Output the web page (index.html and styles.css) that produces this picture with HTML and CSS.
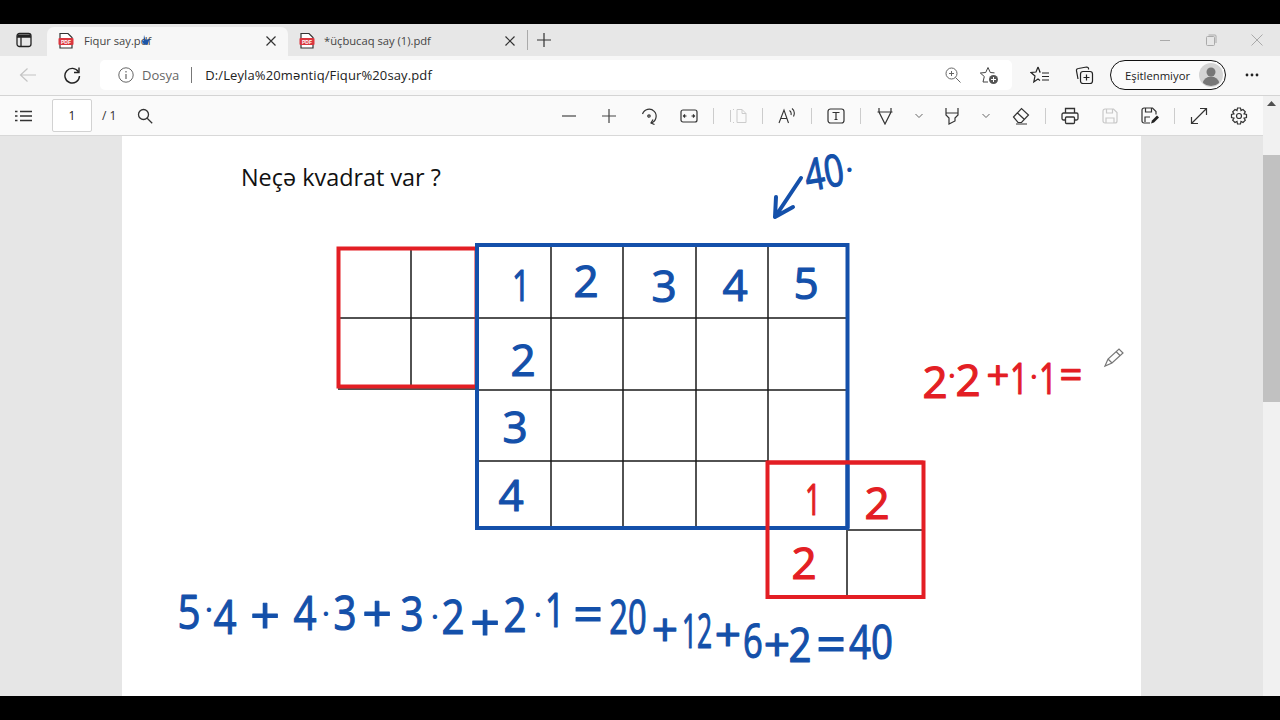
FILE: index.html
```html
<!DOCTYPE html>
<html lang="az">
<head>
  <meta charset="UTF-8">
  <title>Fiqur say.pdf</title>
  <link rel="stylesheet" href="styles.css">
</head>
<body>

<div class="video-bar"></div>

<div class="tab-strip">
  <button class="tab-actions">
    <svg width="16" height="16" viewBox="0 0 16 16" fill="none" stroke="#222" stroke-width="1.3"><rect x="1" y="1.500" width="14" height="13" rx="2.500"/><path d="M1 5h14M5 5v9.500"/><path d="M1.500 2.500h13v2.500h-13z" fill="#222" stroke="none"/></svg>
  </button>
  <div class="tab tab-active">
    <svg class="pdf-icon" width="16" height="17" viewBox="0 0 16 17"><path d="M2 1.500h8l4 4v10.500h-12z" fill="#fff" stroke="#333" stroke-width="1.200"/><rect x="0.500" y="6" width="15" height="7" rx="1" fill="#d9363e"/><text x="8" y="11.500" class="pdf-label">PDF</text></svg>
    <span class="tab-title">Fiqur say.pdf</span>
    <svg class="tab-close" width="10" height="10" viewBox="0 0 10 10" stroke="#333" stroke-width="1.200"><path d="M.5.500l9 9M9.500.500l-9 9"/></svg>
    <svg class="cursor-mark" width="10" height="11" viewBox="0 0 10 11"><path d="M3 0l1.500 5 4-1-2 6-4-1-2-4 2 1z" fill="#1c55a8"/></svg>
  </div>
  <div class="tab">
    <svg class="pdf-icon" width="16" height="17" viewBox="0 0 16 17"><path d="M2 1.500h8l4 4v10.500h-12z" fill="#fff" stroke="#333" stroke-width="1.200"/><rect x="0.500" y="6" width="15" height="7" rx="1" fill="#d9363e"/><text x="8" y="11.500" class="pdf-label">PDF</text></svg>
    <span class="tab-title">*üçbucaq say (1).pdf</span>
    <svg class="tab-close" width="10" height="10" viewBox="0 0 10 10" stroke="#333" stroke-width="1.200"><path d="M.5.500l9 9M9.500.500l-9 9"/></svg>
  </div>
  <span class="tab-sep"></span>
  <button class="new-tab">
    <svg width="16" height="16" viewBox="0 0 16 16" stroke="#333" stroke-width="1.200"><path d="M8 1v14M1 8h14"/></svg>
  </button>
  <div class="window-btns">
    <svg width="12" height="12" viewBox="0 0 12 12" stroke="#aaa"><path d="M1 6.500h10"/></svg>
    <svg width="12" height="12" viewBox="0 0 12 12" stroke="#aaa" fill="none"><rect x="1.500" y="2.500" width="8" height="9" rx="1"/><path d="M3.500 1h6.500a1 1 0 0 1 1 1v7"/></svg>
    <svg width="12" height="12" viewBox="0 0 12 12" stroke="#aaa"><path d="M.5.500l11 11M11.500.500l-11 11"/></svg>
  </div>
</div>

<div class="nav-bar">
  <button class="nav-btn">
    <svg width="18" height="16" viewBox="0 0 18 16" fill="none" stroke="#c4c4c4" stroke-width="1.200"><path d="M17 8h-15M8.500 1.500l-7 6.500 7 6.500"/></svg>
  </button>
  <button class="nav-btn nav-reload">
    <svg width="18" height="18" viewBox="0 0 18 18" fill="none" stroke="#222" stroke-width="1.400"><path d="M15.500 6a7.300 7.300 0 1 0 1 4"/><path d="M16 1.500v5h-5"/></svg>
  </button>
  <div class="address">
    <svg class="info-icon" width="16" height="16" viewBox="0 0 16 16" fill="none" stroke="#666"><circle cx="8" cy="8" r="7.200"/><path d="M8 7v5M8 4v1.500" stroke-width="1.200"/></svg>
    <span class="addr-scheme">Dosya</span>
    <span class="addr-sep"></span>
    <span class="addr-path">D:/Leyla%20məntiq/Fiqur%20say.pdf</span>
    <svg class="addr-zoom" width="16" height="16" viewBox="0 0 16 16" fill="none" stroke="#666"><circle cx="6.500" cy="6.500" r="5.500"/><path d="M10.500 10.500l5 5M4 6.500h5M6.500 4v5"/></svg>
    <svg class="addr-fav" width="20" height="20" viewBox="0 0 20 20" fill="none" stroke="#444"><path d="M9 17h-5l1.300-5.500-4-3.500 5.400-.500 2.300-5 2.300 5 4.200.400"/><circle cx="14.500" cy="14.500" r="4.500" fill="#555" stroke="none"/><path d="M14.500 12v5M12 14.500h5" stroke="#fff"/></svg>
  </div>
  <button class="nav-btn nav-favs">
    <svg width="20" height="20" viewBox="0 0 20 20" fill="none" stroke="#222" stroke-width="1.200"><path d="M8 2l2 5h-1M8 2l-2 5-5 .500 4 3.500-1.200 6 4.200-3 2 1.500"/><path d="M12 8h7M12 11.500h7M12 15h7"/></svg>
  </button>
  <button class="nav-btn nav-coll">
    <svg width="20" height="20" viewBox="0 0 20 20" fill="none" stroke="#222" stroke-width="1.200"><rect x="6.500" y="6.500" width="12" height="12" rx="2.500"/><path d="M12.500 9.500v6M9.500 12.500h6M14.500 4.500a2 2 0 0 0-2-2.500l-8 1.500a2 2 0 0 0-2 2.500l1.500 8"/></svg>
  </button>
  <div class="profile">
    <span class="profile-text">Eşitlenmiyor</span>
    <svg class="avatar" width="24" height="24" viewBox="0 0 24 24"><circle cx="12" cy="12" r="12" fill="#d4d4d4"/><circle cx="12" cy="9" r="4.500" fill="#777"/><path d="M4 20a8 6.500 0 0 1 16 0a12 12 0 0 1-16 0z" fill="#777"/></svg>
  </div>
  <span class="nav-dots">
    <svg width="14" height="4" viewBox="0 0 14 4" fill="#222"><circle cx="2" cy="2" r="1.400"/><circle cx="7" cy="2" r="1.400"/><circle cx="12" cy="2" r="1.400"/></svg>
  </span>
</div>

<div class="main">
  <div class="viewer">
    <div class="pdf-toolbar">
      <svg class="tool-list" width="18" height="12" viewBox="0 0 18 12" stroke="#333" stroke-width="1.300"><path d="M0 1.500h2.500M5 1.500h12M0 6h2.500M5 6h12M0 10.500h2.500M5 10.500h12"/></svg>
      <span class="page-box">1</span>
      <span class="page-total">/ 1</span>
      <svg class="tool-search" width="16" height="16" viewBox="0 0 16 16" fill="none" stroke="#333" stroke-width="1.300"><circle cx="6.500" cy="6.500" r="5"/><path d="M10.200 10.200l5 5"/></svg>

      <div class="tools">
        <span class="tool"><svg width="18" height="18" viewBox="0 0 18 18" stroke="#444" stroke-width="1.200"><path d="M2 9h14"/></svg></span>
        <span class="tool"><svg width="18" height="18" viewBox="0 0 18 18" stroke="#444" stroke-width="1.200"><path d="M2 9h14M9 2v14"/></svg></span>
        <span class="tool"><svg width="18" height="18" viewBox="0 0 18 18" fill="none" stroke="#333" stroke-width="1.200"><path d="M2.500 7a7 7 0 1 1 8.500 9"/><path d="M13 12.500l-2 3.500 3.500 1.500"/><circle cx="9" cy="9" r="1.200"/></svg></span>
        <span class="tool"><svg width="18" height="16" viewBox="0 0 18 16" fill="none" stroke="#333" stroke-width="1.200"><rect x="1" y="2" width="16" height="12" rx="2"/><path d="M3.500 8h3M5 6.500l-1.500 1.500 1.500 1.500M14.500 8h-3M13 6.500l1.500 1.500-1.500 1.500"/></svg></span>
        <span class="tool-sep"></span>
        <span class="tool"><svg width="18" height="16" viewBox="0 0 18 16" fill="none" stroke="#ccc"><path d="M1.500 2v12M4 1.500h1M4 14.500h1M8 1.500h5l4 4v9h-9z"/><path d="M13 1.500v4h4"/></svg></span>
        <span class="tool-sep"></span>
        <span class="tool"><svg width="18" height="18" viewBox="0 0 18 18" fill="none" stroke="#333" stroke-width="1.100"><path d="M1 16l5-13 4.500 13M2.800 11.500h6"/><path d="M11.500 3.500c1.500 1 2 2.500 1.500 4.500M14 1.500c2 1.500 3 4.500 1.500 8"/></svg></span>
        <span class="tool-sep"></span>
        <span class="tool"><svg width="18" height="16" viewBox="0 0 18 16" fill="none" stroke="#333" stroke-width="1.200"><rect x="1" y="1" width="16" height="14" rx="2.500"/><path d="M5.500 4.500h7M9 4.500v7M7.500 11.500h3"/></svg></span>
        <span class="tool-sep"></span>
        <span class="tool"><svg width="18" height="18" viewBox="0 0 18 18" fill="none" stroke="#333" stroke-width="1.200"><path d="M1.500 5h15M3 1v4l6 12 6-12v-4"/></svg></span>
        <span class="tool-chev"><svg width="10" height="6" viewBox="0 0 10 6" fill="none" stroke="#666"><path d="M1.500 1l3.500 3.500 3.500-3.500"/></svg></span>
        <span class="tool"><svg width="18" height="18" viewBox="0 0 18 18" fill="none" stroke="#333" stroke-width="1.200"><path d="M3 1v7l3 3v6l6-3v-3l3-3v-7M3 6h12"/></svg></span>
        <span class="tool-chev tool-chev-last"><svg width="10" height="6" viewBox="0 0 10 6" fill="none" stroke="#666"><path d="M1.500 1l3.500 3.500 3.500-3.500"/></svg></span>
        <span class="tool"><svg width="18" height="18" viewBox="0 0 18 18" fill="none" stroke="#333" stroke-width="1.200"><path d="M1.500 10l8-8.500 7 6.500-7 7.500h-3.500zM5.500 6l7 6.500M4 17h11"/></svg></span>
        <span class="tool-sep"></span>
        <span class="tool"><svg width="18" height="18" viewBox="0 0 18 18" fill="none" stroke="#333" stroke-width="1.300"><path d="M4.500 6v-4.500h9v4.500M4.500 13h-2a1.500 1.500 0 0 1-1.500-1.500v-4a1.500 1.500 0 0 1 1.500-1.500h13a1.500 1.500 0 0 1 1.500 1.500v4a1.500 1.500 0 0 1-1.500 1.500h-2"/><rect x="4.500" y="10" width="9" height="6.500" rx="1"/></svg></span>
        <span class="tool"><svg width="16" height="16" viewBox="0 0 16 16" fill="none" stroke="#c8c8c8" stroke-width="1.200"><path d="M1 3a2 2 0 0 1 2-2h8.500l3.500 3.500v8.500a2 2 0 0 1-2 2h-10a2 2 0 0 1-2-2z"/><path d="M4.500 1v4h6v-4M4 15v-5h8v5"/></svg></span>
        <span class="tool"><svg width="18" height="18" viewBox="0 0 18 18" fill="none" stroke="#333" stroke-width="1.200"><path d="M9 16h-6a2 2 0 0 1-2-2v-11a2 2 0 0 1 2-2h8.500l3.500 3.500v3"/><path d="M4.500 1v4h6v-4M4 15v-5h5"/><path d="M10 16.500l1-3 5-5 2 2-5 5z" fill="#222" stroke="none"/></svg></span>
        <span class="tool-sep"></span>
        <span class="tool"><svg width="18" height="18" viewBox="0 0 18 18" fill="none" stroke="#333" stroke-width="1.200"><path d="M2 16l14-14M10 1.500h6.500v6.500M1.500 10v6.500h6.500"/></svg></span>
        <span class="tool"><svg width="18" height="18" viewBox="0 0 18 18" fill="none" stroke="#333" stroke-width="1.200"><circle cx="9" cy="9" r="2.500"/><path d="M7.500 1h3l.5 2.500 2-1 2.300 2.300-1.300 2 2.500.700v3l-2.500.700 1.300 2-2.300 2.300-2-1-.5 2.500h-3l-.5-2.500-2 1-2.300-2.300 1.300-2-2.500-.700v-3l2.500-.700-1.300-2 2.300-2.300 2 1z"/></svg></span>
      </div>
    </div>

    <div class="pdf-area">
      <div class="pdf-page">
        <h1 class="pdf-title">Neçə kvadrat var ?</h1>

        <!-- cedvel ve el yazisi: sehifenin koordinatlari ile -->
        <svg class="ink" width="1019" height="560" viewBox="122 136 1019 560">
          <g stroke="#1a1a1a" stroke-width="1.500">
            <path d="M338 318h510M338 389h139M477 390h371M477 461h291M411 248v140M551 245v283M623 245v283M696 245v283M768 245v217M848 530h76M847 530v67"/>
          </g>
          <g fill="none" stroke-width="4">
            <rect x="338.500" y="248.500" width="138" height="138" stroke="#e31e24"/>
            <rect x="477" y="245" width="370.500" height="283" stroke="#1450aa"/>
            <rect x="767.500" y="462.500" width="156" height="134.500" stroke="#e31e24"/>
          </g>
          <path d="M847.500 462v66" stroke="#1450aa" stroke-width="4"/>
          <path d="M767.500 462.500h156" stroke="#e31e24" stroke-width="4" fill="none"/>

          <path class="ink-line" d="M801 178l-26 39M775 217l1-20M775 217l18-10"/>

          <g class="hand hand-blue">
            <text transform="translate(824 172) rotate(-10) scale(.78 1) translate(0 16)">40</text>
            <text x="849.500" y="177" class="hand-dot">·</text>

            <text transform="translate(521 301) scale(.72 1)">1</text>
            <text x="586" y="297">2</text>
            <text x="664" y="302">3</text>
            <text x="735" y="301">4</text>
            <text x="806" y="299">5</text>
            <text x="523" y="376">2</text>
            <text x="515" y="443">3</text>
            <text x="511" y="511">4</text>
          </g>

          <g class="hand hand-blue hand-big">
            <text transform="translate(189 629) scale(.84 1)">5</text>
            <text x="209" y="617" class="hand-dot">·</text>
            <text transform="translate(225 634) scale(.84 1)">4</text>
            <text x="265" y="634" class="hand-op">+</text>
            <text transform="translate(305 630) scale(.84 1)">4</text>
            <text x="326" y="621" class="hand-dot">·</text>
            <text transform="translate(345 630) scale(.84 1)">3</text>
            <text x="377" y="632" class="hand-op">+</text>
            <text transform="translate(412 631) scale(.84 1)">3</text>
            <text x="435" y="624" class="hand-dot">·</text>
            <text transform="translate(453 634) scale(.84 1)">2</text>
            <text x="485" y="641" class="hand-op">+</text>
            <text transform="translate(515 632) scale(.84 1)">2</text>
            <text x="538" y="622" class="hand-dot">·</text>
            <text transform="translate(555 627) scale(.72 1)">1</text>
            <text x="588" y="632" class="hand-op">=</text>
            <text transform="translate(628 634) scale(.68 1)">20</text>
            <text x="665" y="646" class="hand-op-md">+</text>
            <text transform="translate(697 648) scale(.55 1)">12</text>
            <text x="728" y="651" class="hand-op-md">+</text>
            <text transform="translate(753 658) scale(.72 1)">6</text>
            <text x="777" y="661" class="hand-op-md">+</text>
            <text transform="translate(800 662) scale(.84 1)">2</text>
            <text x="831" y="662" class="hand-op">=</text>
            <text transform="translate(871 659) scale(.8 1)">40</text>
          </g>

          <g class="hand hand-red">
            <text transform="translate(813 515) scale(.64 1)">1</text>
            <text x="877" y="519">2</text>
            <text x="804" y="579">2</text>

            <text x="935" y="398">2</text>
            <text x="952" y="383" class="hand-dot">·</text>
            <text x="968" y="396">2</text>
            <text x="998" y="390" class="hand-op-sm">+</text>
            <text transform="translate(1019 394) scale(.72 1)">1</text>
            <text x="1034" y="384" class="hand-dot">·</text>
            <text transform="translate(1048 394) scale(.72 1)">1</text>
            <text x="1071" y="389" class="hand-op-sm">=</text>
          </g>

          <g fill="none" stroke="#777" stroke-width="1.200">
            <path d="M1105 366l3-7 11-10 4 4-11 10zM1108 359l4 4M1116 351.500l4 4"/>
          </g>
        </svg>
      </div>
    </div>
  </div>

  <div class="scrollbar">
    <svg class="scroll-up" width="9" height="5" viewBox="0 0 9 5"><path d="M4.500 0l4.500 5h-9z" fill="#505050"/></svg>
    <div class="scroll-thumb"></div>
  </div>
</div>

<div class="video-bar"></div>

</body>
</html>
```

FILE: styles.css
```css
* {
    box-sizing: border-box;
}

html, body {
    margin: 0;
    height: 720px;
    overflow: hidden;
}

body {
    display: flex;
    flex-direction: column;
    font-family: "Open Sans", "Noto Sans", sans-serif;
    background: #000;
    color: #222;
}

button {
    border: none;
    background: none;
    padding: 0;
    display: flex;
    align-items: center;
    justify-content: center;
}

.video-bar {
    height: 24px;
    background: #000;
    flex: none;
}

/* tab strip */
.tab-strip {
    height: 32px;
    flex: none;
    display: flex;
    align-items: flex-end;
    background: #e7e7e7;
}
.tab-actions {
    width: 47px;
    height: 32px;
}
.tab {
    width: 241px;
    height: 29px;
    display: flex;
    align-items: center;
    padding: 0 12px 2px 11px;
    font-size: 11.200px;
    color: #444;
    position: relative;
}
.tab-active {
    background: #f7f7f7;
    border-radius: 7px 7px 0 0;
}
.tab + .tab {
    width: 239px;
}
.pdf-icon {
    flex: none;
    margin-right: 10px;
}
.tab + .tab .pdf-icon {
    margin-right: 9px;
}
.pdf-label {
    font-family: "Liberation Sans", sans-serif;
    font-size: 5px;
    font-weight: bold;
    fill: #fff;
    text-anchor: middle;
}
.tab-title {
    flex: 1;
    white-space: nowrap;
}
.tab-close {
    flex: none;
}
.cursor-mark {
    position: absolute;
    left: 94px;
    top: 8px;
}
.tab-sep {
    width: 1px;
    height: 20px;
    margin-bottom: 6px;
    background: #aaa;
}
.new-tab {
    width: 32px;
    height: 32px;
}
.window-btns {
    margin-left: auto;
    height: 32px;
    width: 121px;
    padding: 0 17px 0 0;
    display: flex;
    align-items: center;
    justify-content: space-between;
}

/* nav bar */
.nav-bar {
    height: 40px;
    flex: none;
    display: flex;
    align-items: center;
    background: #f7f7f7;
    border-bottom: 1px solid #d4d4d4;
    padding: 0 0 1px 8px;
}
.nav-btn {
    width: 40px;
    height: 30px;
}
.nav-reload {
    margin-left: 4px;
}
.address {
    width: 912px;
    height: 30px;
    margin-left: 8px;
    background: #fff;
    border-radius: 5px;
    display: flex;
    align-items: center;
    padding: 0 13px 0 18px;
    font-size: 13px;
}
.info-icon {
    flex: none;
}
.addr-scheme {
    margin-left: 8px;
    color: #666;
}
.addr-sep {
    width: 1px;
    height: 16px;
    margin: 0 13px 0 12px;
    background: #777;
}
.addr-path {
    color: #222;
    white-space: nowrap;
    letter-spacing: .12px;
}
.addr-zoom {
    margin-left: auto;
    margin-right: 18px;
}
.nav-favs {
    margin-left: 8px;
}
.nav-coll {
    margin-left: 4px;
}
.profile {
    width: 116px;
    height: 30px;
    margin-left: 6px;
    border: 1.5px solid #111;
    border-radius: 15px;
    display: flex;
    align-items: center;
    justify-content: space-between;
    padding: 0 2px 0 14px;
    font-size: 11.300px;
    background: #fbfbfb;
}
.nav-dots {
    margin-left: 19px;
    display: flex;
}

/* pdf viewer */
.main {
    flex: 1;
    display: flex;
    min-height: 0;
}
.viewer {
    flex: 1;
    display: flex;
    flex-direction: column;
    min-width: 0;
}
.pdf-toolbar {
    height: 40px;
    flex: none;
    display: flex;
    align-items: center;
    background: #fafafa;
    border-bottom: 1px solid #d8d8d8;
    padding: 0 4px 0 15px;
}
.tool-list {
    flex: none;
}
.page-box {
    width: 40px;
    height: 33px;
    margin-left: 19px;
    border: 1px solid #d2d2d2;
    border-radius: 2px;
    background: #fff;
    display: flex;
    align-items: center;
    justify-content: center;
    font-size: 12px;
}
.page-total {
    margin-left: 10px;
    font-size: 12px;
    color: #333;
}
.tool-search {
    margin-left: 21px;
}
.tools {
    margin-left: auto;
    display: flex;
    align-items: center;
}
.tool {
    width: 40px;
    height: 32px;
    display: flex;
    align-items: center;
    justify-content: center;
}
.tool-sep {
    width: 1px;
    height: 16px;
    margin: 0 4px;
    background: #ccc;
}
.tool-chev {
    width: 27px;
    display: flex;
    justify-content: center;
}
.tool-chev-last {
    width: 28px;
    margin-right: 1px;
}

.pdf-area {
    flex: 1;
    background: #e6e6e6;
    padding-left: 122px;
    min-height: 0;
}
.pdf-page {
    width: 1019px;
    height: 100%;
    background: #fff;
    position: relative;
    overflow: hidden;
}
.pdf-title {
    margin: 0;
    padding: 24px 0 0 119px;
    font-size: 23.400px;
    line-height: 35px;
    font-weight: 400;
    color: #111;
}

/* el yazisi */
.ink {
    position: absolute;
    left: 0;
    top: 0;
}
.ink-line {
    fill: none;
    stroke: #1450aa;
    stroke-width: 4;
    stroke-linecap: round;
}
.hand text {
    font-family: "Open Sans", "Lato", sans-serif;
    font-size: 44px;
    text-anchor: middle;
    stroke-width: 1.200px;
    stroke-linejoin: round;
}
.hand-big text {
    font-size: 48px;
}
.hand-blue text {
    fill: #1450aa;
    stroke: #1450aa;
}
.hand-red text {
    fill: #e31e24;
    stroke: #e31e24;
}
.hand .hand-op {
    font-size: 52px;
}
.hand .hand-op-md {
    font-size: 46px;
}
.hand .hand-op-sm {
    font-size: 40px;
}
.hand .hand-dot {
    font-size: 20px;
    stroke-width: 2px;
}

/* scrollbar */
.scrollbar {
    width: 17px;
    flex: none;
    background: #f1f1f1;
    padding-top: 5px;
    display: flex;
    flex-direction: column;
    align-items: center;
}
.scroll-up {
    flex: none;
}
.scroll-thumb {
    width: 100%;
    height: 247px;
    margin-top: 49px;
    background: #c1c1c1;
}
```
